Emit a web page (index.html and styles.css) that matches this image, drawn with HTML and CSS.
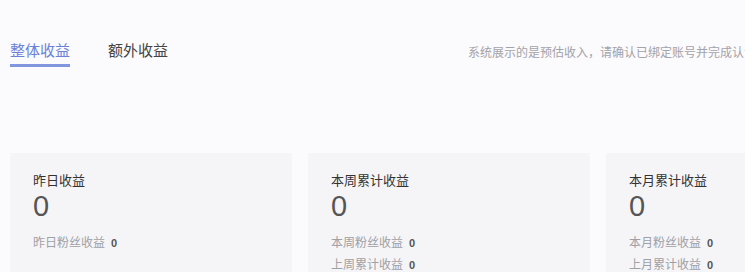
FILE: index.html
```html
<!DOCTYPE html>
<html lang="zh-CN">
<head>
<meta charset="utf-8">
<title>收益</title>
<link rel="stylesheet" href="styles.css">
</head>
<body>
<div class="page">
  <div class="header">
    <div class="tabs">
      <div class="tab active">整体收益</div>
      <div class="tab">额外收益</div>
    </div>
    <div class="note">系统展示的是预估收入，请确认已绑定账号并完成认证，暂时</div>
  </div>
  <div class="cards">
    <div class="card">
      <div class="card-title">昨日收益</div>
      <div class="card-value">0</div>
      <div class="row"><span class="label">昨日粉丝收益</span><span class="num">0</span></div>
    </div>
    <div class="card">
      <div class="card-title">本周累计收益</div>
      <div class="card-value">0</div>
      <div class="row"><span class="label">本周粉丝收益</span><span class="num">0</span></div>
      <div class="row"><span class="label">上周累计收益</span><span class="num">0</span></div>
    </div>
    <div class="card">
      <div class="card-title">本月累计收益</div>
      <div class="card-value">0</div>
      <div class="row"><span class="label">本月粉丝收益</span><span class="num">0</span></div>
      <div class="row"><span class="label">上月累计收益</span><span class="num">0</span></div>
    </div>
  </div>
</div>
</body>
</html>
```

FILE: styles.css
```css
html, body {
  margin: 0;
  padding: 0;
  background: #fbfafd;
  overflow: hidden;
}

body {
  font-family: "Liberation Sans", "Noto Sans CJK SC", sans-serif;
  color: #333;
  width: 745px;
  height: 272px;
}

.page {
  width: 1100px;
  padding-top: 40px;
}

.header {
  display: flex;
  align-items: flex-start;
}

.tabs {
  display: flex;
  gap: 38px;
  padding-left: 10px;
}

.tab {
  font-size: 15px;
  line-height: 22px;
  color: #444;
  padding-bottom: 2px;
  border-bottom: 3px solid transparent;
}

.tab.active {
  color: #6b82d8;
  border-bottom-color: #8097df;
}

.note {
  margin-left: 300px;
  margin-top: 5px;
  font-size: 12px;
  line-height: 16px;
  color: #a3a3a8;
  white-space: nowrap;
}

.cards {
  display: flex;
  gap: 16px;
  padding-left: 10px;
  margin-top: 86px;
}

.card {
  width: 282px;
  flex: none;
  box-sizing: border-box;
  background: #f5f5f8;
  padding: 19px 23px 12px;
  height: 140px;
}

.card-title {
  font-size: 13px;
  line-height: 18px;
  color: #333;
}

.card-value {
  font-size: 29px;
  line-height: 30px;
  margin-top: 1px;
  color: #555;
}

.row {
  display: flex;
  align-items: center;
  gap: 6px;
  font-size: 12px;
  line-height: 22px;
  color: #a0a0a5;
}

.card-value + .row {
  margin-top: 11px;
}

.num {
  color: #555;
  font-size: 11px;
  font-weight: bold;
}
```
